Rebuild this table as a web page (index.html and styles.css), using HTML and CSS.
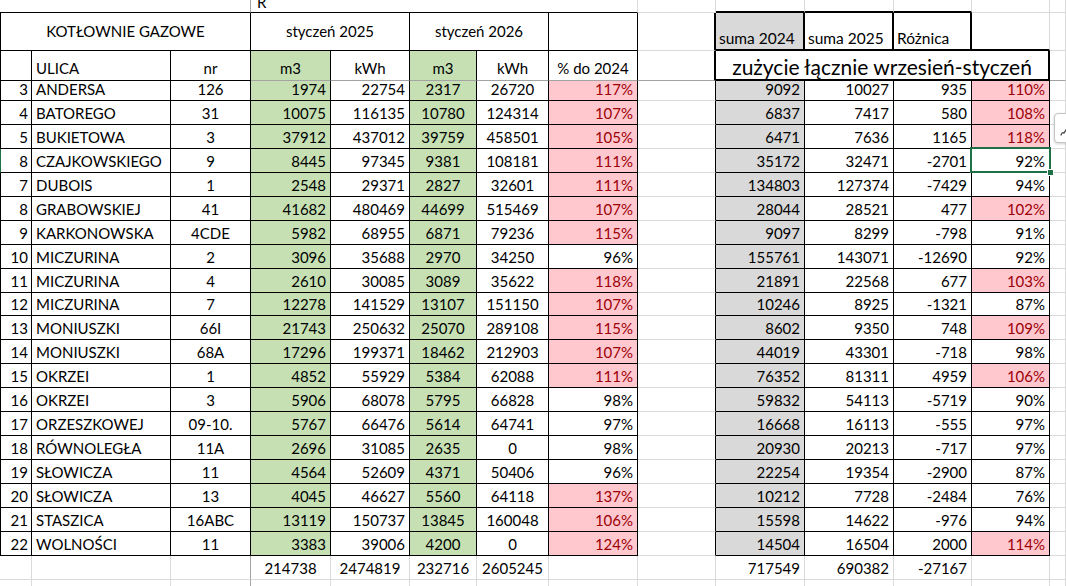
FILE: index.html
```html
<!DOCTYPE html>
<html lang="pl">
<head>
<meta charset="utf-8">
<title>Kotłownie gazowe</title>
<link rel="stylesheet" href="styles.css">
</head>
<body>
<div class="sheet">
  <div class="row h13">
    <div class="c sp3 kb fr"></div>
    <div class="c sp5 kb rtop">R</div>
    <div class="c"></div>
    <div class="c bb2"></div>
    <div class="c bb2"></div>
    <div class="c bb2"></div>
    <div class="c"></div>
    <div class="c"></div>
  </div>
  <div class="row h38">
    <div class="c sp3 k l m mid">KOTŁOWNIE GAZOWE</div>
    <div class="c sp2 k m mid">styczeń 2025</div>
    <div class="c sp2 k m mid">styczeń 2026</div>
    <div class="c k"></div>
    <div class="c br2"></div>
    <div class="c s br2 bb2 hd">suma 2024</div>
    <div class="c br2 bb2 hd">suma 2025</div>
    <div class="c br2 bb2 hd">Różnica</div>
    <div class="c bb2"></div>
    <div class="c"></div>
  </div>
  <div class="row h30 hdr2">
    <div class="c k l"></div>
    <div class="c k">ULICA</div>
    <div class="c k m">nr</div>
    <div class="c k fb g m">m3</div>
    <div class="c k fb m">kWh</div>
    <div class="c k fb g m">m3</div>
    <div class="c k fb m">kWh</div>
    <div class="c k fb m">% do 2024</div>
    <div class="c br2 fb"></div>
    <div class="c sp4 br2 bb2 big m">zużycie łącznie wrzesień-styczeń</div>
    <div class="c fb"></div>
  </div>

  <div class="row d h20"><div>3</div><div>ANDERSA</div><div>126</div><div>1974</div><div>22754</div><div>2317</div><div>26720</div><div class="p">117%</div><div></div><div>9092</div><div>10027</div><div>935</div><div class="p">110%</div><div></div></div>
  <div class="row d"><div>4</div><div>BATOREGO</div><div>31</div><div>10075</div><div>116135</div><div>10780</div><div>124314</div><div class="p">107%</div><div></div><div>6837</div><div>7417</div><div>580</div><div class="p">108%</div><div></div></div>
  <div class="row d"><div>5</div><div>BUKIETOWA</div><div>3</div><div>37912</div><div>437012</div><div>39759</div><div>458501</div><div class="p">105%</div><div></div><div>6471</div><div>7636</div><div>1165</div><div class="p">118%</div><div></div></div>
  <div class="row d selrow"><div>8</div><div>CZAJKOWSKIEGO</div><div>9</div><div>8445</div><div>97345</div><div>9381</div><div>108181</div><div class="p">111%</div><div></div><div>35172</div><div>32471</div><div>-2701</div><div>92%</div><div></div></div>
  <div class="row d"><div>7</div><div>DUBOIS</div><div>1</div><div>2548</div><div>29371</div><div>2827</div><div>32601</div><div class="p">111%</div><div></div><div>134803</div><div>127374</div><div>-7429</div><div>94%</div><div></div></div>
  <div class="row d"><div>8</div><div>GRABOWSKIEJ</div><div>41</div><div>41682</div><div>480469</div><div>44699</div><div>515469</div><div class="p">107%</div><div></div><div>28044</div><div>28521</div><div>477</div><div class="p">102%</div><div></div></div>
  <div class="row d"><div>9</div><div>KARKONOWSKA</div><div>4CDE</div><div>5982</div><div>68955</div><div>6871</div><div>79236</div><div class="p">115%</div><div></div><div>9097</div><div>8299</div><div>-798</div><div>91%</div><div></div></div>
  <div class="row d"><div>10</div><div>MICZURINA</div><div>2</div><div>3096</div><div>35688</div><div>2970</div><div>34250</div><div>96%</div><div></div><div>155761</div><div>143071</div><div>-12690</div><div>92%</div><div></div></div>
  <div class="row d"><div>11</div><div>MICZURINA</div><div>4</div><div>2610</div><div>30085</div><div>3089</div><div>35622</div><div class="p">118%</div><div></div><div>21891</div><div>22568</div><div>677</div><div class="p">103%</div><div></div></div>
  <div class="row d h23"><div>12</div><div>MICZURINA</div><div>7</div><div>12278</div><div>141529</div><div>13107</div><div>151150</div><div class="p">107%</div><div></div><div>10246</div><div>8925</div><div>-1321</div><div>87%</div><div></div></div>
  <div class="row d"><div>13</div><div>MONIUSZKI</div><div>66I</div><div>21743</div><div>250632</div><div>25070</div><div>289108</div><div class="p">115%</div><div></div><div>8602</div><div>9350</div><div>748</div><div class="p">109%</div><div></div></div>
  <div class="row d"><div>14</div><div>MONIUSZKI</div><div>68A</div><div>17296</div><div>199371</div><div>18462</div><div>212903</div><div class="p">107%</div><div></div><div>44019</div><div>43301</div><div>-718</div><div>98%</div><div></div></div>
  <div class="row d"><div>15</div><div>OKRZEI</div><div>1</div><div>4852</div><div>55929</div><div>5384</div><div>62088</div><div class="p">111%</div><div></div><div>76352</div><div>81311</div><div>4959</div><div class="p">106%</div><div></div></div>
  <div class="row d"><div>16</div><div>OKRZEI</div><div>3</div><div>5906</div><div>68078</div><div>5795</div><div>66828</div><div>98%</div><div></div><div>59832</div><div>54113</div><div>-5719</div><div>90%</div><div></div></div>
  <div class="row d"><div>17</div><div>ORZESZKOWEJ</div><div>09-10.</div><div>5767</div><div>66476</div><div>5614</div><div>64741</div><div>97%</div><div></div><div>16668</div><div>16113</div><div>-555</div><div>97%</div><div></div></div>
  <div class="row d"><div>18</div><div>RÓWNOLEGŁA</div><div>11A</div><div>2696</div><div>31085</div><div>2635</div><div>0</div><div>98%</div><div></div><div>20930</div><div>20213</div><div>-717</div><div>97%</div><div></div></div>
  <div class="row d"><div>19</div><div>SŁOWICZA</div><div>11</div><div>4564</div><div>52609</div><div>4371</div><div>50406</div><div>96%</div><div></div><div>22254</div><div>19354</div><div>-2900</div><div>87%</div><div></div></div>
  <div class="row d"><div>20</div><div>SŁOWICZA</div><div>13</div><div>4045</div><div>46627</div><div>5560</div><div>64118</div><div class="p">137%</div><div></div><div>10212</div><div>7728</div><div>-2484</div><div>76%</div><div></div></div>
  <div class="row d"><div>21</div><div>STASZICA</div><div>16ABC</div><div>13119</div><div>150737</div><div>13845</div><div>160048</div><div class="p">106%</div><div></div><div>15598</div><div>14622</div><div>-976</div><div>94%</div><div></div></div>
  <div class="row d"><div>22</div><div>WOLNOŚCI</div><div>11</div><div>3383</div><div>39006</div><div>4200</div><div>0</div><div class="p">124%</div><div></div><div>14504</div><div>16504</div><div>2000</div><div class="p">114%</div><div></div></div>

  <div class="row t"><div></div><div></div><div></div><div>214738</div><div>2474819</div><div>232716</div><div>2605245</div><div></div><div></div><div>717549</div><div>690382</div><div>-27167</div><div></div><div></div></div>
  <div class="row t e"><div></div><div></div><div></div><div></div><div></div><div></div><div></div><div></div><div></div><div></div><div></div><div></div><div></div><div></div></div>
</div>

<div class="selection"><span class="handle"></span></div>
<div class="qa">
  <svg width="14" height="16" viewBox="0 0 14 16"><path d="M2 13 Q3 10 5 11 L9 5" fill="none" stroke="#444" stroke-width="1.3" stroke-linecap="round"/></svg>
</div>
</body>
</html>
```
FILE: styles.css
```css
:root {
  --grid: #dadada;
  --frz: #a3a3a3;
  --green: #1e7145;
}
html, body {
  margin: 0;
  background: #fff;
}
body {
  font-family: Lato, "Open Sans", sans-serif;
  font-size: 15px;
  color: #000;
  width: 1066px;
  height: 586px;
  overflow: hidden;
  position: relative;
}
.sheet {
  display: flex;
  flex-direction: column;
}
.row {
  display: grid;
  grid-template-columns: 32px 139px 80px 80px 79px 67px 72px 89px 78px 89px 89px 78px 78px 1fr;
  height: 24px;
  flex: none;
}
.h13 { height: 13px; }
.h38 { height: 38px; }
.h30 { height: 30px; }
.h20 { height: 20px; }
.h23 { height: 23px; }

.c, .d > div, .t > div {
  box-sizing: border-box;
  border-right: 1px solid var(--grid);
  border-bottom: 1px solid var(--grid);
  display: flex;
  align-items: flex-end;
  padding: 0 4px 2px;
  line-height: 18px;
  white-space: nowrap;
  overflow: hidden;
  min-width: 0;
}

.sp2 { grid-column: span 2; }
.sp3 { grid-column: span 3; }
.sp4 { grid-column: span 4; }
.sp5 { grid-column: span 5; }

.k { border-right-color: #000; border-bottom-color: #000; }
.kb { border-bottom-color: #000; }
.l { border-left: 1px solid #000; }
.fb { border-bottom-color: var(--frz); }
.fr { border-right-color: var(--frz); }
.br2 { border-right: 2px solid #000; }
.bb2 { border-bottom: 2px solid #000; }

.m { justify-content: center; }
.r { justify-content: flex-end; }
.mid { align-items: center; padding-bottom: 1px; }
.hd { padding-left: 3px; padding-bottom: 2px; font-size: 15.5px; }
.hdr2 > .c { padding-bottom: 3px; }
.hdr2 > .big {
  font-size: 21px;
  line-height: 25px;
  padding-bottom: 0;
}
.rtop { padding-left: 6px; padding-bottom: 1px; }

.g { background: #c6e0b4; }
.s { background: #d9d9d9; }

/* data rows */
.d > div { border-right-color: #000; border-bottom-color: #000; justify-content: flex-end; }
.d > :nth-child(1) { border-left: 1px solid #000; padding: 0 3px 2px 0; }
.d.selrow > :nth-child(1) { border-left-color: var(--green); }
.d > :nth-child(2) { justify-content: flex-start; }
.d > :nth-child(3) { justify-content: center; }
.d > :nth-child(4) { background: #c6e0b4; }
.d > :nth-child(6) { background: #c6e0b4; justify-content: center; }
.d > :nth-child(7) { justify-content: center; }
.d > :nth-child(9) { border-bottom-color: var(--grid); }
.d > :nth-child(10) { background: #d9d9d9; }
.d > :nth-child(14) { border-right-color: var(--grid); border-bottom-color: var(--grid); }
.d > .p { background: #ffc7ce; color: #9c0006; }

/* totals and empty rows */
.t > :nth-child(3) { border-right-color: var(--frz); }
.t > :nth-child(4),
.t > :nth-child(5),
.t > :nth-child(6),
.t > :nth-child(7) { justify-content: center; }
.t > :nth-child(10),
.t > :nth-child(11),
.t > :nth-child(12) { justify-content: flex-end; }

/* overlays */
.selection {
  position: absolute;
  left: 970px;
  top: 147px;
  width: 81px;
  height: 26px;
  box-sizing: border-box;
  border: 2px solid var(--green);
}
.handle {
  position: absolute;
  right: -5px;
  bottom: -5px;
  width: 5px;
  height: 5px;
  background: var(--green);
  border: 1px solid #fff;
}
.qa {
  position: absolute;
  left: 1054px;
  top: 113px;
  width: 34px;
  height: 30px;
  box-sizing: border-box;
  border: 1px solid #c3c3c3;
  border-radius: 4px;
  background: #fff;
  box-shadow: 0 1px 3px rgba(0,0,0,0.18);
  padding: 8px 0 0 4px;
}
.qa svg { display: block; }
```
